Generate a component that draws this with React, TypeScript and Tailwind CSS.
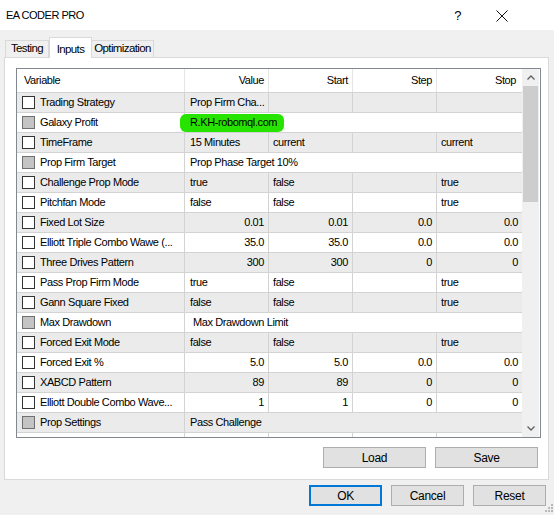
import React from "react";

type Row = {
  name: string;
  gray: boolean;
  disabled?: boolean;
  span?: string;
  green?: boolean;
  indent?: boolean;
  cells?: [string, string, string, string];
  right?: boolean;
};

const rows: Row[] = [
  { name: "Trading Strategy", gray: true, cells: ["Prop Firm Cha...", "", "", ""] },
  { name: "Galaxy Profit", gray: false, disabled: true, span: "R.KH-robomql.com", green: true },
  { name: "TimeFrame", gray: true, cells: ["15 Minutes", "current", "", "current"] },
  { name: "Prop Firm Target", gray: false, disabled: true, span: "Prop Phase Target 10%" },
  { name: "Challenge Prop Mode", gray: true, cells: ["true", "false", "", "true"] },
  { name: "Pitchfan Mode", gray: false, cells: ["false", "false", "", "true"] },
  { name: "Fixed Lot Size", gray: true, right: true, cells: ["0.01", "0.01", "0.0", "0.0"] },
  { name: "Elliott Triple Combo Wawe (...", gray: false, right: true, cells: ["35.0", "35.0", "0.0", "0.0"] },
  { name: "Three Drives Pattern", gray: true, right: true, cells: ["300", "300", "0", "0"] },
  { name: "Pass Prop Firm Mode", gray: false, cells: ["true", "false", "", "true"] },
  { name: "Gann Square Fixed", gray: true, cells: ["false", "false", "", "true"] },
  { name: "Max Drawdown", gray: false, disabled: true, span: "Max Drawdown Limit", indent: true },
  { name: "Forced Exit Mode", gray: true, cells: ["false", "false", "", "true"] },
  { name: "Forced Exit %", gray: false, right: true, cells: ["5.0", "5.0", "0.0", "0.0"] },
  { name: "XABCD Pattern", gray: true, right: true, cells: ["89", "89", "0", "0"] },
  { name: "Elliott Double Combo Wave...", gray: false, right: true, cells: ["1", "1", "0", "0"] },
  { name: "Prop Settings", gray: true, disabled: true, span: "Pass Challenge" },
];

function Checkbox({ disabled }: { disabled?: boolean }) {
  return disabled ? (
    <div className="w-[13px] h-[13px] border border-[#6f6f6f] bg-[#c4c4c4] shrink-0" />
  ) : (
    <div className="w-[13px] h-[13px] border border-[#333333] bg-white shrink-0" />
  );
}

function DataRow({ r }: { r: Row }) {
  const bg = r.gray ? "bg-[#ebebeb]" : "bg-white";
  return (
    <div className={`flex h-[20px] shrink-0 border-b border-[#d3d3d3] ${bg}`}>
      <div className="w-[168px] shrink-0 flex items-center pl-[5px] border-r border-[#d3d3d3]">
        <Checkbox disabled={r.disabled} />
        <span className="ml-[5px] whitespace-nowrap">{r.name}</span>
      </div>
      {r.span !== undefined ? (
        <div className={`flex-1 flex items-center ${r.indent ? "pl-[8px]" : "pl-[5px]"}`}>
          {r.green ? (
            <span className="inline-flex items-center h-[18px] -ml-[10px] pl-[10px] pr-[7px] rounded-[6px] bg-[#27e400] whitespace-nowrap">
              {r.span}
            </span>
          ) : (
            <span className="whitespace-nowrap">{r.span}</span>
          )}
        </div>
      ) : (
        <>
          {r.cells!.map((c, i) => (
            <div
              key={i}
              className={`${i === 3 ? "w-[85px]" : "w-[84px] border-r border-[#d3d3d3]"} shrink-0 flex items-center whitespace-nowrap overflow-hidden ${
                r.right ? "justify-end pr-[4px]" : i === 0 ? "pl-[5px]" : "pl-[4px]"
              }`}
            >
              {c}
            </div>
          ))}
        </>
      )}
    </div>
  );
}

function Btn({ label, w, primary }: { label: string; w: string; primary?: boolean }) {
  return (
    <div
      className={`${w} h-[21px] flex items-center justify-center bg-[#e1e1e1] text-[12px] tracking-[-0.3px] ${
        primary ? "border-2 border-[#0078d7]" : "border border-[#adadad]"
      }`}
    >
      {label}
    </div>
  );
}

export default function App() {
  return (
    <div className="w-[554px] h-[515px] bg-[#f0f0f0] flex flex-col overflow-hidden font-['Liberation_Sans',Arial,sans-serif] text-[11px] tracking-[-0.4px] text-black relative">
      {/* title bar */}
      <div className="h-[30px] bg-white flex items-center shrink-0 pt-[1px]">
        <span className="ml-[6px] text-[11px] tracking-[-0.5px]">EA CODER PRO</span>
        <span className="ml-auto mr-[35px] text-[13px]">?</span>
        <svg width="12" height="12" viewBox="0 0 12 12" className="mr-[46px]">
          <path d="M0.5 0.5 L11.5 11.5 M11.5 0.5 L0.5 11.5" stroke="#111" strokeWidth="1" fill="none" />
        </svg>
      </div>

      {/* tabs */}
      <div className="h-[27px] flex items-end pl-[5px] shrink-0 relative z-10">
        <div className="w-[44px] h-[17px] flex items-center justify-center border border-[#d9d9d9] border-b-0 bg-[#f0f0f0] text-[11.5px] tracking-[-0.6px]">
          Testing
        </div>
        <div className="w-[43px] h-[21px] -mb-[1px] flex items-start pt-[3px] justify-center border border-[#d9d9d9] border-b-0 bg-white text-[11.5px] tracking-[-0.6px]">
          Inputs
        </div>
        <div className="w-[62px] h-[17px] flex items-center justify-center border border-[#d9d9d9] border-b-0 border-l-0 bg-[#f0f0f0] text-[11.5px] tracking-[-0.6px]">
          Optimization
        </div>
      </div>

      {/* panel */}
      <div className="mx-[4px] w-[545px] h-[423px] border border-[#d9d9d9] bg-white shrink-0 flex flex-col">
        <div className="ml-[11px] mt-[10px] w-[525px] h-[370px] shrink-0 border border-[#828790] flex overflow-hidden">
          <div className="w-[505px] flex flex-col overflow-hidden">
            {/* header */}
            <div className="flex h-[24px] bg-white border-b border-[#d3d3d3] shrink-0">
              <div className="w-[168px] flex items-center pl-[7px] border-r border-[#e5e5e5]">Variable</div>
              <div className="w-[84px] flex items-center justify-end pr-[4px] border-r border-[#e5e5e5]">Value</div>
              <div className="w-[84px] flex items-center justify-end pr-[4px] border-r border-[#e5e5e5]">Start</div>
              <div className="w-[84px] flex items-center justify-end pr-[4px] border-r border-[#e5e5e5]">Step</div>
              <div className="w-[85px] flex items-center justify-end pr-[6px]">Stop</div>
            </div>
            {rows.map((r, i) => (
              <DataRow key={i} r={r} />
            ))}
            <div className="flex h-[20px] bg-white shrink-0">
              <div className="w-[168px] border-r border-[#d3d3d3]" />
              <div className="w-[84px] border-r border-[#d3d3d3]" />
              <div className="w-[84px] border-r border-[#d3d3d3]" />
              <div className="w-[84px] border-r border-[#d3d3d3]" />
            </div>
          </div>
          {/* scrollbar */}
          <div className="w-[17px] bg-[#f0f0f0] flex flex-col items-center shrink-0">
            <div className="h-[17px] w-full flex items-center justify-center shrink-0">
              <svg width="8" height="5" viewBox="0 0 8 5">
                <path d="M0.5 4.5 L4 1 L7.5 4.5" stroke="#606060" strokeWidth="1.3" fill="none" />
              </svg>
            </div>
            <div className="w-[15px] h-[116px] bg-[#cdcdcd] shrink-0" />
            <div className="flex-1" />
            <div className="h-[17px] w-full flex items-center justify-center shrink-0">
              <svg width="8" height="5" viewBox="0 0 8 5">
                <path d="M0.5 0.5 L4 4 L7.5 0.5" stroke="#606060" strokeWidth="1.3" fill="none" />
              </svg>
            </div>
          </div>
        </div>
        <div className="flex justify-end gap-[9px] mt-[9px] mr-[10px]">
          <Btn label="Load" w="w-[103px]" />
          <Btn label="Save" w="w-[103px]" />
        </div>
      </div>

      {/* bottom buttons */}
      <div className="flex justify-end gap-[9px] mt-[5px] mr-[8px]">
        <Btn label="OK" w="w-[73px]" primary />
        <Btn label="Cancel" w="w-[73px]" />
        <Btn label="Reset" w="w-[73px]" />
      </div>

      {/* resize grip */}
      <svg width="10" height="10" viewBox="0 0 10 10" className="absolute right-[1px] bottom-[1px]">
        <g fill="#b8b8b8">
          <rect x="8" y="0" width="2" height="2" />
          <rect x="5" y="3" width="2" height="2" />
          <rect x="8" y="3" width="2" height="2" />
          <rect x="2" y="6" width="2" height="2" />
          <rect x="5" y="6" width="2" height="2" />
          <rect x="8" y="6" width="2" height="2" />
        </g>
      </svg>
    </div>
  );
}
